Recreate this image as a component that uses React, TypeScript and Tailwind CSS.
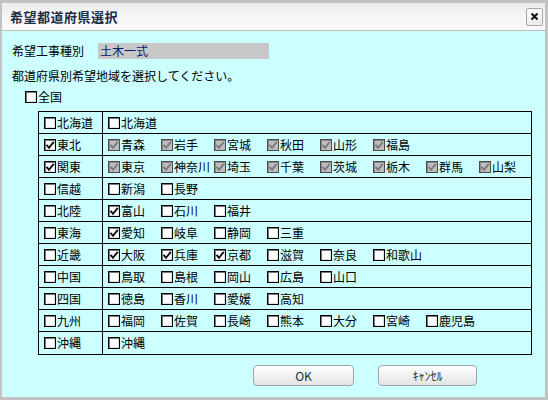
import React from 'react';

type Pref = { name: string; checked?: boolean; disabled?: boolean };
type Region = { name: string; checked?: boolean; prefs: Pref[] };

const regions: Region[] = [
    { name: '北海道', prefs: [{ name: '北海道' }] },
    {
        name: '東北',
        checked: true,
        prefs: ['青森', '岩手', '宮城', '秋田', '山形', '福島'].map((n) => ({ name: n, checked: true, disabled: true })),
    },
    {
        name: '関東',
        checked: true,
        prefs: ['東京', '神奈川', '埼玉', '千葉', '茨城', '栃木', '群馬', '山梨'].map((n) => ({ name: n, checked: true, disabled: true })),
    },
    { name: '信越', prefs: [{ name: '新潟' }, { name: '長野' }] },
    { name: '北陸', prefs: [{ name: '富山', checked: true }, { name: '石川' }, { name: '福井' }] },
    { name: '東海', prefs: [{ name: '愛知', checked: true }, { name: '岐阜' }, { name: '静岡' }, { name: '三重' }] },
    {
        name: '近畿',
        prefs: [
            { name: '大阪', checked: true },
            { name: '兵庫', checked: true },
            { name: '京都', checked: true },
            { name: '滋賀' },
            { name: '奈良' },
            { name: '和歌山' },
        ],
    },
    { name: '中国', prefs: ['鳥取', '島根', '岡山', '広島', '山口'].map((n) => ({ name: n })) },
    { name: '四国', prefs: ['徳島', '香川', '愛媛', '高知'].map((n) => ({ name: n })) },
    { name: '九州', prefs: ['福岡', '佐賀', '長崎', '熊本', '大分', '宮崎', '鹿児島'].map((n) => ({ name: n })) },
    { name: '沖縄', prefs: [{ name: '沖縄' }] },
];

function CheckBox({ checked, disabled }: { checked?: boolean; disabled?: boolean }) {
    return (
        <span
            className={`inline-flex items-center justify-center w-[12px] h-[12px] shrink-0 border ${
                disabled
                    ? 'border-[#4a4a4a] bg-[#bdbdbd] shadow-[inset_1px_1px_0_#8a8a8a]'
                    : 'border-black bg-white shadow-[inset_1px_1px_0_#7a7a7a,inset_-1px_-1px_0_#e0e0e0]'
            }`}
        >
            {checked && (
                <svg width="10" height="10" viewBox="0 0 10 10">
                    <path
                        d="M1.5 4.8 L4 7.8 L8.8 1.8"
                        fill="none"
                        stroke={disabled ? '#7a7a7a' : '#111'}
                        strokeWidth="1.9"
                    />
                </svg>
            )}
        </span>
    );
}

function Check({ label, checked, disabled }: { label: string; checked?: boolean; disabled?: boolean }) {
    return (
        <span className="inline-flex items-center gap-[1px] w-[53px] shrink-0 whitespace-nowrap">
            <CheckBox checked={checked} disabled={disabled} />
            <span>{label}</span>
        </span>
    );
}

export default function App() {
    return (
        <div
            className="w-[548px] h-[400px] bg-[#c2c2c2] pt-[3px] pl-[2px] overflow-hidden text-[12px] leading-[16px] text-black"
            style={{ fontFamily: '"Noto Sans CJK JP", "Noto Sans", sans-serif' }}
        >
            <div className="w-[543px] h-[394px] flex flex-col">
                {/* Title bar */}
                <div className="h-[28px] shrink-0 flex items-center justify-between pl-[8px] pr-[2px] border-b border-[#bfbfbf] bg-gradient-to-b from-[#ececec] via-[#f6f6f6] to-[#f9f9f9]">
                    <span className="text-[13px] font-bold text-[#1d2c45] tracking-[0.5px]">希望都道府県選択</span>
                    <span className="w-[17px] h-[18px] flex items-center justify-center border border-[#a8a8a8] rounded-[2px] bg-gradient-to-b from-white to-[#ececec]">
                        <svg width="9" height="9" viewBox="0 0 9 9">
                            <path d="M1.5 1.5 L7.5 7.5 M7.5 1.5 L1.5 7.5" stroke="#111" strokeWidth="2" />
                        </svg>
                    </span>
                </div>

                {/* Body */}
                <div className="flex-1 bg-[#ccffff] pl-[10px] pt-[12px]">
                    <div className="flex items-center h-[16px]">
                        <span className="w-[86px]">希望工事種別</span>
                        <span className="w-[171px] h-[16px] bg-[#c8c8c8] pl-[2px] text-[#0c1a6a]">土木一式</span>
                    </div>
                    <div className="mt-[9px] h-[16px]">都道府県別希望地域を選択してください。</div>
                    <div className="mt-[5px] ml-[13px] h-[16px] flex items-center">
                        <Check label="全国" />
                    </div>

                    {/* Region table */}
                    <div className="mt-[6px] ml-[26px] w-[494px] border border-black">
                        {regions.map((r, i) => (
                            <div
                                key={r.name}
                                className={`flex h-[22px] ${i < regions.length - 1 ? 'border-b border-black' : 'h-[21px]'}`}
                            >
                                <div className="w-[64px] shrink-0 border-r border-black pl-[5px] flex items-center">
                                    <Check label={r.name} checked={r.checked} />
                                </div>
                                <div className="flex-1 pl-[5px] flex items-center">
                                    {r.prefs.map((p) => (
                                        <Check key={p.name} label={p.name} checked={p.checked} disabled={p.disabled} />
                                    ))}
                                </div>
                            </div>
                        ))}
                    </div>

                    {/* Buttons */}
                    <div className="mt-[10px] ml-[241px] flex gap-[24px]">
                        <button className="w-[101px] h-[21px] rounded-[4px] border border-[#a4a4a4] bg-gradient-to-b from-white to-[#e4e4e4] text-[#12323c] text-[12px] leading-[19px]">
                            OK
                        </button>
                        <button className="w-[99px] h-[21px] rounded-[4px] border border-[#a4a4a4] bg-gradient-to-b from-white to-[#e4e4e4] text-[#12323c] text-[12px] leading-[19px]">
                            ｷｬﾝｾﾙ
                        </button>
                    </div>
                </div>
            </div>
        </div>
    );
}
